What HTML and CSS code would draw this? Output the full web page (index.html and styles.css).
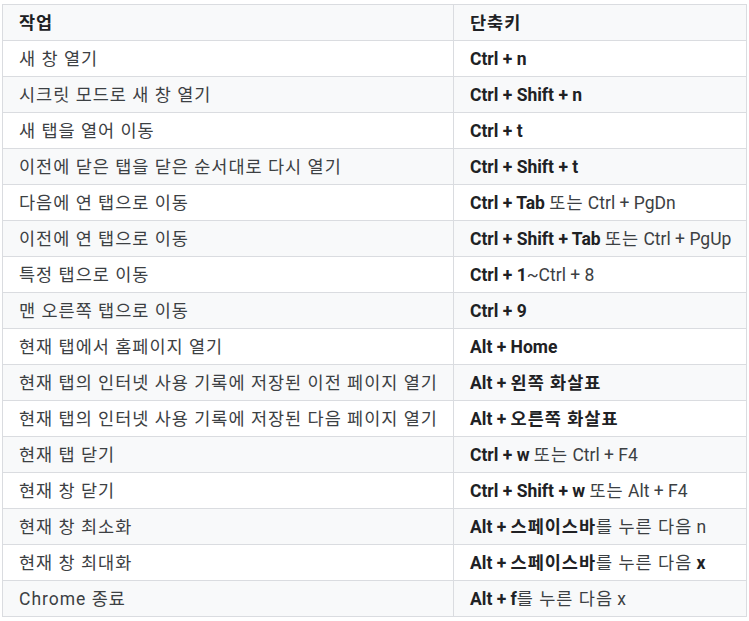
FILE: index.html
```html
<!DOCTYPE html>
<html lang="ko">
<head>
<meta charset="utf-8">
<link rel="stylesheet" href="styles.css">
</head>
<body>
<table class="shortcuts">
  <thead>
    <tr><th class="c1">작업</th><th class="c2"><span class="ko">단축키</span></th></tr>
  </thead>
  <tbody>
    <tr><td>새 창 열기</td><td><b>Ctrl + n</b></td></tr>
    <tr><td>시크릿 모드로 새 창 열기</td><td><b>Ctrl + Shift + n</b></td></tr>
    <tr><td>새 탭을 열어 이동</td><td><b>Ctrl + t</b></td></tr>
    <tr><td>이전에 닫은 탭을 닫은 순서대로 다시 열기</td><td><b>Ctrl + Shift + t</b></td></tr>
    <tr><td>다음에 연 탭으로 이동</td><td><b>Ctrl + Tab</b> <span class="ko">또는</span> Ctrl + PgDn</td></tr>
    <tr><td>이전에 연 탭으로 이동</td><td><b>Ctrl + Shift + Tab</b> <span class="ko">또는</span> Ctrl + PgUp</td></tr>
    <tr><td>특정 탭으로 이동</td><td><b>Ctrl + 1</b>~Ctrl + 8</td></tr>
    <tr><td>맨 오른쪽 탭으로 이동</td><td><b>Ctrl + 9</b></td></tr>
    <tr><td>현재 탭에서 홈페이지 열기</td><td><b>Alt + Home</b></td></tr>
    <tr><td>현재 탭의 인터넷 사용 기록에 저장된 이전 페이지 열기</td><td><b>Alt + <span class="ko">왼쪽 화살표</span></b></td></tr>
    <tr><td>현재 탭의 인터넷 사용 기록에 저장된 다음 페이지 열기</td><td><b>Alt + <span class="ko">오른쪽 화살표</span></b></td></tr>
    <tr><td>현재 탭 닫기</td><td><b>Ctrl + w</b> <span class="ko">또는</span> Ctrl + F4</td></tr>
    <tr><td>현재 창 닫기</td><td><b>Ctrl + Shift + w</b> <span class="ko">또는</span> Alt + F4</td></tr>
    <tr><td>현재 창 최소화</td><td><b>Alt + <span class="ko">스페이스바</span></b><span class="ko">를 누른 다음</span> n</td></tr>
    <tr><td>현재 창 최대화</td><td><b>Alt + <span class="ko">스페이스바</span></b><span class="ko">를 누른 다음</span> <b>x</b></td></tr>
    <tr><td>Chrome 종료</td><td><b>Alt + f</b><span class="ko">를 누른 다음</span> x</td></tr>
  </tbody>
</table>
</body>
</html>
```

FILE: styles.css
```css
html, body {
  margin: 0;
  padding: 0;
  background: #ffffff;
}
body {
  padding: 4px 2px 0 2px;
  font-family: Roboto, "Noto Sans CJK KR", sans-serif;
  font-size: 17.5px;
  color: #3c4043;
}
.shortcuts {
  border-collapse: collapse;
  width: 745px;
  table-layout: fixed;
}
.shortcuts th,
.shortcuts td {
  border: 1px solid #dadce0;
  height: 36px;
  padding: 0 16px;
  text-align: left;
  vertical-align: middle;
  line-height: 22px;
  white-space: nowrap;
  box-sizing: border-box;
}
.shortcuts th {
  font-weight: 700;
  color: #202124;
  background: #f8f9fa;
}
.shortcuts .c1 { width: 451px; }
.shortcuts th.c1,
.shortcuts td:first-child {
  letter-spacing: 1px;
}
.shortcuts tbody tr:nth-child(even) td {
  background: #f8f9fa;
}
.shortcuts b {
  font-weight: 700;
  color: #202124;
}
.shortcuts .ko {
  letter-spacing: 1px;
}
```
